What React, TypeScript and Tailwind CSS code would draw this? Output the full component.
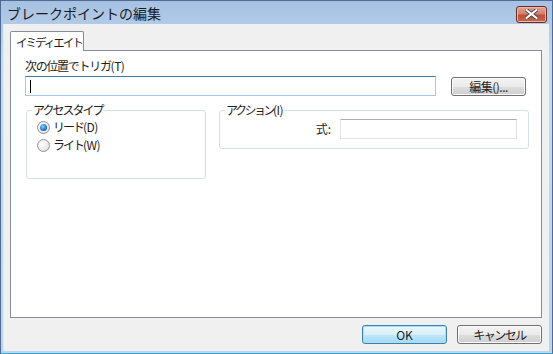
import React from "react";

function L({ jp, en, t }: { jp: string; en?: string; t: string }) {
  return (
    <span className="whitespace-nowrap">
      <span className={t}>{jp}</span>
      {en && <span className="tracking-[-0.5px]">{en}</span>}
    </span>
  );
}

function Radio({ checked, jp, en }: { checked?: boolean; jp: string; en: string }) {
  return (
    <div className="flex items-center h-[18px]">
      <div className="w-[13px] h-[13px] rounded-full border border-[#8f9298] bg-[radial-gradient(circle_at_35%_35%,#ffffff,#dcdcdc)] flex items-center justify-center">
        {checked && (
          <div className="w-[7px] h-[7px] rounded-full bg-[radial-gradient(circle_at_40%_35%,#7fd3ff,#1b63b5_70%,#0d3f80)]" />
        )}
      </div>
      <span className="ml-[3px] leading-[14px]">
        <L jp={jp} en={en} t="tracking-[-2px]" />
      </span>
    </div>
  );
}

function Btn({ children, w, primary }: { children: React.ReactNode; w: string; primary?: boolean }) {
  return (
    <div
      className={
        "h-[19px] rounded-[3px] border flex items-center justify-center leading-[14px] whitespace-nowrap " +
        w +
        (primary
          ? " border-[#3c7fb1] bg-[linear-gradient(#eaf6fd_0%,#d9f0fc_50%,#bee6fd_51%,#a7d9f5_100%)] shadow-[inset_0_0_0_1px_#a5e0fb]"
          : " border-[#707070] bg-[linear-gradient(#f2f2f2_0%,#ebebeb_50%,#dddddd_51%,#cfcfcf_100%)] shadow-[inset_0_0_0_1px_#fcfcfc]")
      }
    >
      {children}
    </div>
  );
}

export default function App() {
  return (
    <div className="w-[553px] h-[354px] flex flex-col bg-[linear-gradient(#a6c1e2,#c4d9f1_60px,#bcd3ee)] border border-[#4e6c91] border-b-[#2fa9d8] text-[12px] text-[#1e1e1e] font-['Noto_Sans_CJK_JP','Noto_Sans',sans-serif]">
      {/* title bar */}
      <div className="h-[22px] flex items-center justify-between pl-[6px] pr-[5px]">
        <span className="text-[14px] leading-[16px] mt-[2px] text-[#1a1a1a] whitespace-nowrap">ブレークポイントの編集</span>
        <div className="w-[31px] h-[17px] mt-[4px] rounded-[3px] border border-[#6b2a22] bg-[linear-gradient(#e2a394_0%,#d3806d_45%,#bd4f38_55%,#c66a52_100%)] shadow-[inset_0_0_0_1px_#ecb5a7] flex items-center justify-center">
          <svg width="13" height="10" viewBox="0 0 13 10">
            <path d="M1.5 1 L11.5 9 M11.5 1 L1.5 9" stroke="#4a4a4a" strokeWidth="4" strokeLinecap="square" />
            <path d="M1.5 1 L11.5 9 M11.5 1 L1.5 9" stroke="#ffffff" strokeWidth="2" strokeLinecap="square" />
          </svg>
        </div>
      </div>
      {/* client area */}
      <div className="flex-1 ml-[2px] mr-[3px] mb-[2px] mt-[1px] bg-[#f0f0f0] border-l border-[#dfe9f5] flex flex-col pt-[7px] pl-[6px] pr-[7px]">
        {/* tab */}
        <div className="flex">
          <div className="relative z-10 w-[74px] h-[20px] -mb-px bg-white border border-b-0 border-[#898c95] rounded-t-[2px] pl-[5px] pt-[3px] leading-[14px] text-[11.5px] tracking-[-2px] whitespace-nowrap">
            イミディエイト
          </div>
        </div>
        {/* panel */}
        <div className="w-[532px] h-[268px] bg-white border border-[#898c95] flex flex-col pl-[14px] pt-[8px]">
          <div className="leading-[14px]">
            <L jp="次の位置でトリガ" en="(T)" t="tracking-[-1.3px]" />
          </div>
          <div className="flex items-start mt-[3px]">
            <div className="w-[411px] h-[20px] border border-[#a4c9e3] border-t-[#3d7bad] bg-white flex items-center pl-[4px]">
              <div className="w-px h-[13px] bg-black" />
            </div>
            <div className="ml-[15px] mt-[1px]">
              <Btn w="w-[75px]">
                <L jp="編集" en="()..." t="tracking-[-0.5px]" />
              </Btn>
            </div>
          </div>
          <div className="flex items-start mt-[7px]">
            {/* access type group */}
            <div className="relative ml-[1px] w-[180px] pt-[7px]">
              <div className="h-[69px] border border-[#d5dfe5] rounded-[3px] pl-[10px] pt-[7px] flex flex-col">
                <Radio checked jp="リード" en="(D)" />
                <Radio jp="ライト" en="(W)" />
              </div>
              <span className="absolute left-[6px] top-0 bg-white px-[1px] leading-[14px] tracking-[-2px] whitespace-nowrap">アクセスタイプ</span>
            </div>
            {/* action group */}
            <div className="relative ml-[13px] w-[310px] pt-[7px]">
              <div className="h-[39px] border border-[#d5dfe5] rounded-[3px] pr-[11px] pt-[8px] flex justify-end items-start">
                <span className="leading-[14px] mt-[3px] mr-[9px]">式:</span>
                <div className="w-[177px] h-[20px] border border-[#e2e3ea] border-t-[#abadb3] bg-white" />
              </div>
              <span className="absolute left-[6px] top-0 bg-white px-[1px] leading-[14px]">
                <L jp="アクション" en="(I)" t="tracking-[-2.5px]" />
              </span>
            </div>
          </div>
        </div>
        {/* bottom buttons */}
        <div className="flex justify-end gap-[10px] mt-[7px]">
          <Btn w="w-[85px]" primary>OK</Btn>
          <Btn w="w-[85px]">
            <span className="tracking-[-1.5px]">キャンセル</span>
          </Btn>
        </div>
      </div>
    </div>
  );
}
